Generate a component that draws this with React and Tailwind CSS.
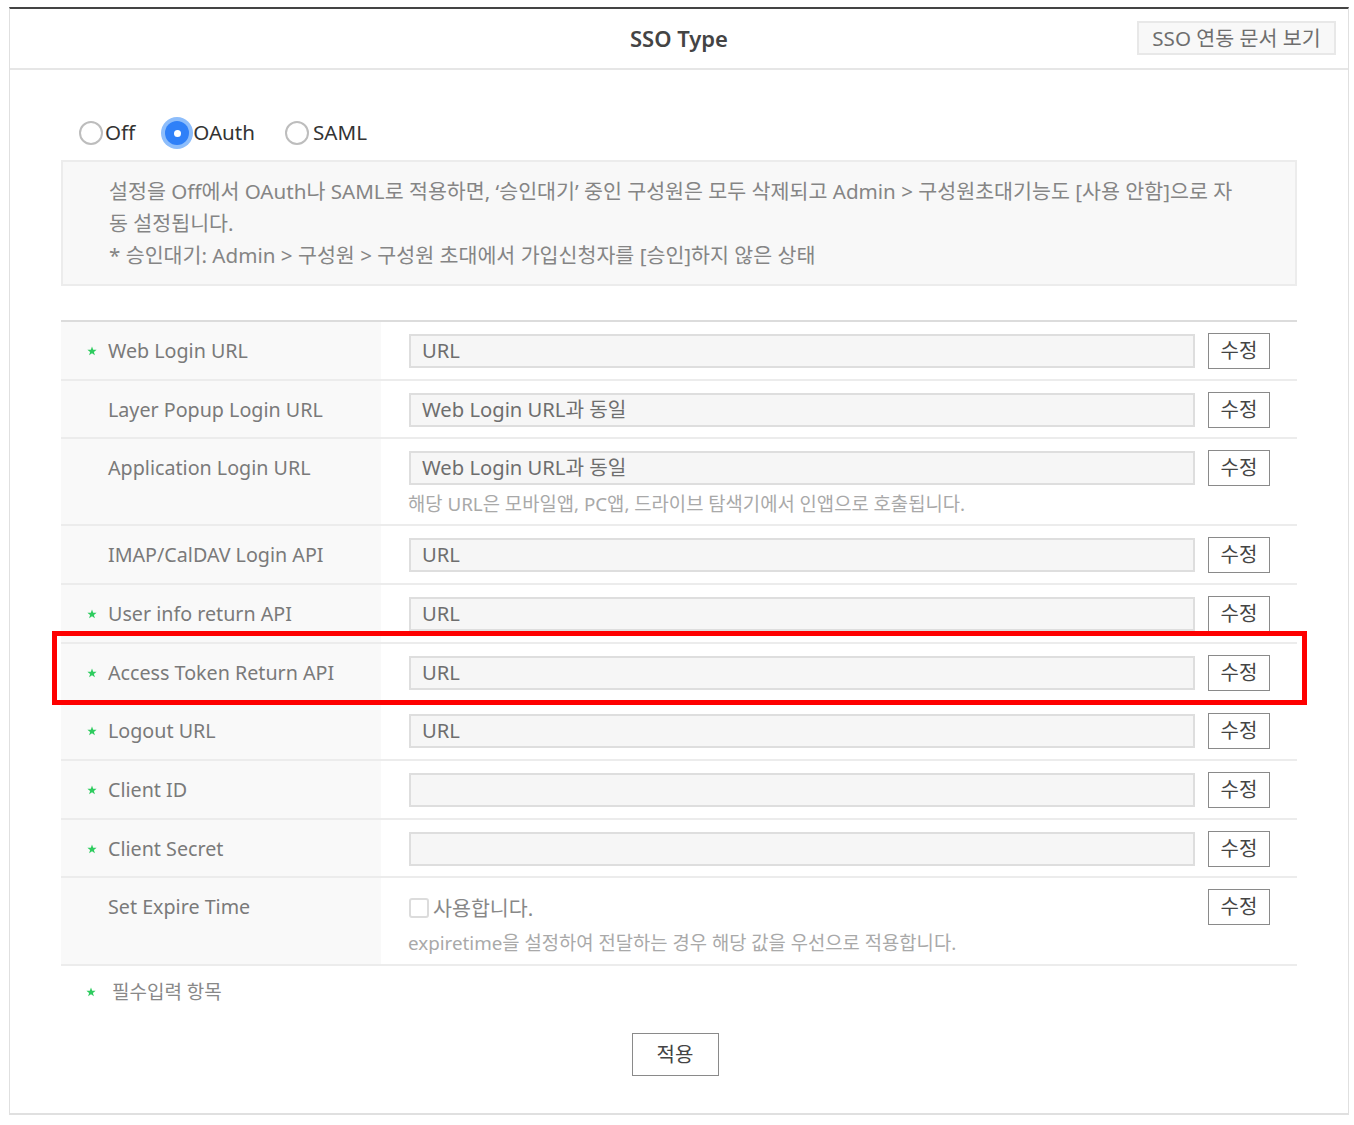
const font = { fontFamily: '"Noto Sans", "Noto Sans CJK KR", sans-serif' };

function Star() {
  return (
    <svg width="10" height="10" viewBox="0 0 10 10" className="shrink-0">
      <path d="M5 0.5 6.2 3.7 9.6 3.8 6.9 5.9 7.9 9.2 5 7.3 2.1 9.2 3.1 5.9 0.4 3.8 3.8 3.7Z" fill="#2ecc5f" />
    </svg>
  );
}

function EditButton() {
  return (
    <button className="w-[62px] h-[36px] mt-[1px] shrink-0 border border-[#8a8a8a] bg-white text-[20px] text-[#444] leading-none">
      수정
    </button>
  );
}

function Row({ label, required, value, height = "h-[59px]", children }) {
  return (
    <div className={`flex ${height} border-b-2 border-[#ececec] box-border`}>
      <div className="w-[320px] shrink-0 bg-[#f9f9f9] flex items-start pt-[16px]">
        <div className="w-[27px] pl-[27px] h-[26px] flex items-center shrink-0">
          {required ? <span className="-ml-[1px]"><Star /></span> : null}
        </div>
        <span className="ml-[20px] text-[19.7px] leading-[26px] text-[#7a7a7a] whitespace-nowrap">{label}</span>
      </div>
      <div className="flex-1 flex items-start pl-[28px] pr-[27px] pt-[10px]">
        <div className="flex-1 min-w-0">
          {children ? children : (
            <div className="h-[34px] mt-[2px] border-2 border-[#dedede] bg-[#f6f6f6] pl-[11px] text-[20.2px] leading-[28px] text-[#6e6e6e]">
              {value}
            </div>
          )}
        </div>
        <div className="ml-[13px]"><EditButton /></div>
      </div>
    </div>
  );
}

function Radio({ label, checked, gap, circleGap = "mr-[2px]" }) {
  return (
    <label className={`flex items-center ${gap}`}>
      {checked ? (
        <span className="w-[32px] h-[32px] rounded-full bg-[#8dbdfb] flex items-center justify-center shrink-0">
          <span className="w-[24px] h-[24px] rounded-full bg-[#2f80f8] flex items-center justify-center">
            <span className="w-[7px] h-[7px] rounded-full bg-white" />
          </span>
        </span>
      ) : (
        <span className={`w-[24px] h-[24px] ${circleGap} rounded-full border-2 border-[#bdbdbd] bg-white shrink-0`} />
      )}
      <span className="text-[20.6px] leading-[24px] text-[#333] pb-[2px]">{label}</span>
    </label>
  );
}

function Hint({ children }) {
  return <div className="text-[18.8px] leading-[24px] text-[#a9a9a9] whitespace-nowrap">{children}</div>;
}

export default function App() {
  return (
    <div style={font} className="relative w-[1354px] h-[1125px] bg-white pt-[7px] pl-[9px] overflow-hidden">
      <div className="w-[1340px] h-[1108px] border-x border-b-2 border-[#e0e0e0] border-t-2 border-t-[#444] box-border">
        <div className="relative h-[61px] border-b-2 border-[#e6e6e6] flex items-center justify-center">
          <span className="text-[22px] font-semibold text-[#444]">SSO Type</span>
          <div className="absolute right-[12px] top-[12px] w-[199px] h-[34px] border-2 border-[#e8e8e8] bg-[#f8f8f8] flex items-center justify-center text-[20.6px] text-[#6e6e6e] pt-[1px]">
            SSO 연동 문서 보기
          </div>
        </div>

        <div className="pl-[51px] pr-[51px]">
          <div className="flex items-center h-[40px] mt-[43px] pl-[18px]">
            <Radio label="Off" gap="mr-[26px]" />
            <Radio label="OAuth" checked gap="mr-[30px]" />
            <Radio label="SAML" circleGap="mr-[4px]" />
          </div>

          <div className="mt-[7px] h-[126px] border-2 border-[#ececec] bg-[#f8f8f8] pl-[46px] pt-[13px] text-[20.6px] leading-[32px] text-[#858585] whitespace-nowrap">
            설정을 Off에서 OAuth나 SAML로 적용하면, ‘승인대기’ 중인 구성원은 모두 삭제되고 Admin &gt; 구성원초대기능도 [사용 안함]으로 자
            <br />
            동 설정됩니다.
            <br />* 승인대기: Admin &gt; 구성원 &gt; 구성원 초대에서 가입신청자를 [승인]하지 않은 상태
          </div>

          <div className="mt-[34px] border-t-2 border-[#dcdcdc]">
            <Row label="Web Login URL" required value="URL" />
            <Row label="Layer Popup Login URL" height="h-[58px]" value="Web Login URL과 동일" />
            <Row label="Application Login URL" height="h-[87px]">
              <div className="h-[34px] mt-[2px] border-2 border-[#dedede] bg-[#f6f6f6] pl-[11px] text-[20.2px] leading-[28px] text-[#6e6e6e]">
                Web Login URL과 동일
              </div>
              <div className="mt-[7px] -ml-[1px]"><Hint>해당 URL은 모바일앱, PC앱, 드라이브 탐색기에서 인앱으로 호출됩니다.</Hint></div>
            </Row>
            <Row label="IMAP/CalDAV Login API" value="URL" />
            <Row label="User info return API" required value="URL" />
            <Row label="Access Token Return API" required height="h-[58px]" value="URL" />
            <Row label="Logout URL" required value="URL" />
            <Row label="Client ID" required value="" />
            <Row label="Client Secret" required height="h-[58px]" value="" />
            <Row label="Set Expire Time" height="h-[88px]">
              <div className="flex items-center h-[34px] mt-[3px]">
                <span className="w-[20px] h-[20px] rounded-[3px] border-2 border-[#dcdcdc] bg-white shrink-0" />
                <span className="ml-[4px] text-[20.6px] text-[#888]">사용합니다.</span>
              </div>
              <div className="mt-[6px] -ml-[1px]"><Hint>expiretime을 설정하여 전달하는 경우 해당 값을 우선으로 적용합니다.</Hint></div>
            </Row>
          </div>

          <div className="flex items-center h-[26px] mt-[13px] pl-[25px]">
            <Star />
            <span className="ml-[16px] text-[19px] text-[#888]">필수입력 항목</span>
          </div>

          <div className="flex justify-center mt-[28px] pr-[8px]">
            <button className="w-[87px] h-[43px] border border-[#8a8a8a] bg-white text-[20px] text-[#444]">적용</button>
          </div>
        </div>
      </div>

      <div className="absolute left-[52px] top-[631px] w-[1255px] h-[74px] border-[5px] border-[#fe0000] pointer-events-none" />
    </div>
  );
}
